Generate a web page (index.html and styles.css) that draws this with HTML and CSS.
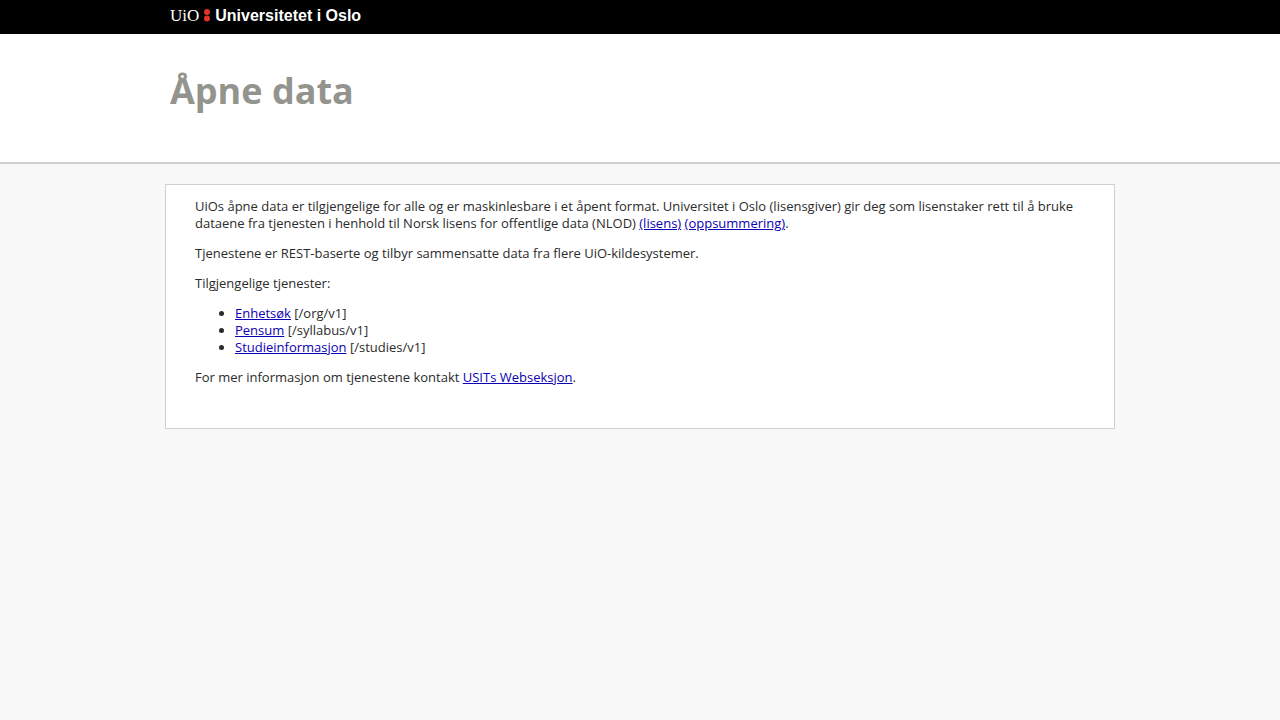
FILE: index.html
```html
<!DOCTYPE html>
<html lang="no">
<head>
  <meta charset="UTF-8" />
  <title>Åpne data - Universitetet i Oslo</title>
  <meta name="viewport" content="width=device-width,initial-scale=1" />
  <link rel="stylesheet" href="styles.css">
</head>
<body>
  <div class="topbar">
    <div class="wrapper">
      <a class="logo" href="https://www.uio.no/">
        <span class="logo-short">UiO</span>
        <svg class="logo-dots" width="6" height="14" viewBox="0 0 6 14" aria-hidden="true">
          <circle cx="3" cy="4" r="3" />
          <circle cx="3" cy="10.4" r="3" />
        </svg>
        <span class="logo-name">Universitetet i Oslo</span>
      </a>
    </div>
  </div>

  <header class="header">
    <div class="wrapper">
      <h1>Åpne data</h1>
    </div>
  </header>

  <main class="content">
    <p>
      UiOs åpne data er tilgjengelige for alle og er maskinlesbare i et åpent format.
      Universitet i Oslo (lisensgiver) gir deg som lisenstaker rett til å bruke dataene
      fra tjenesten i henhold til Norsk lisens for offentlige data (NLOD)
      <a href="#lisens">(lisens)</a> <a href="#oppsummering">(oppsummering)</a>.
    </p>
    <p>Tjenestene er REST-baserte og tilbyr sammensatte data fra flere UiO-kildesystemer.</p>
    <p>Tilgjengelige tjenester:</p>
    <ul>
      <li><a href="/org/v1">Enhetsøk</a> [/org/v1]</li>
      <li><a href="/syllabus/v1">Pensum</a> [/syllabus/v1]</li>
      <li><a href="/studies/v1">Studieinformasjon</a> [/studies/v1]</li>
    </ul>
    <p>For mer informasjon om tjenestene kontakt <a href="#kontakt">USITs Webseksjon</a>.</p>
  </main>
</body>
</html>
```
FILE: styles.css
```css
body {
  margin: 0;
  background: #f8f8f8;
  color: #2b2b2b;
  font-family: 'Open Sans', Arial, sans-serif;
  font-size: 13px;
  line-height: 17px;
}
.wrapper {
  max-width: 940px;
  margin: 0 auto;
}
.topbar {
  background: #000;
  height: 34px;
}
.logo {
  display: flex;
  align-items: center;
  gap: 5px;
  height: 30px;
  color: #fff;
  text-decoration: none;
}
.logo-short {
  font-family: 'Liberation Serif', 'Times New Roman', serif;
  font-size: 17px;
}
.logo-dots {
  fill: #e0342b;
}
.logo-name {
  font-family: 'Liberation Sans', Arial, sans-serif;
  font-size: 16px;
  font-weight: 700;
}
.header {
  background: #fff;
  border-bottom: 2px solid #d0d0d0;
  padding: 32px 0 46px;
}
h1 {
  margin: 0;
  color: #94948f;
  font-size: 36px;
  font-weight: 700;
  line-height: 50px;
}
.content {
  box-sizing: border-box;
  max-width: 950px;
  margin: 20px auto;
  padding: 13px 29px 42px;
  background: #fff;
  border: 1px solid #d0d0d0;
}
p, ul {
  margin: 0 0 13px;
}
.content p:last-child {
  margin-bottom: 0;
}
ul {
  padding-left: 40px;
}
.content a {
  color: #0c00b4;
}
```
